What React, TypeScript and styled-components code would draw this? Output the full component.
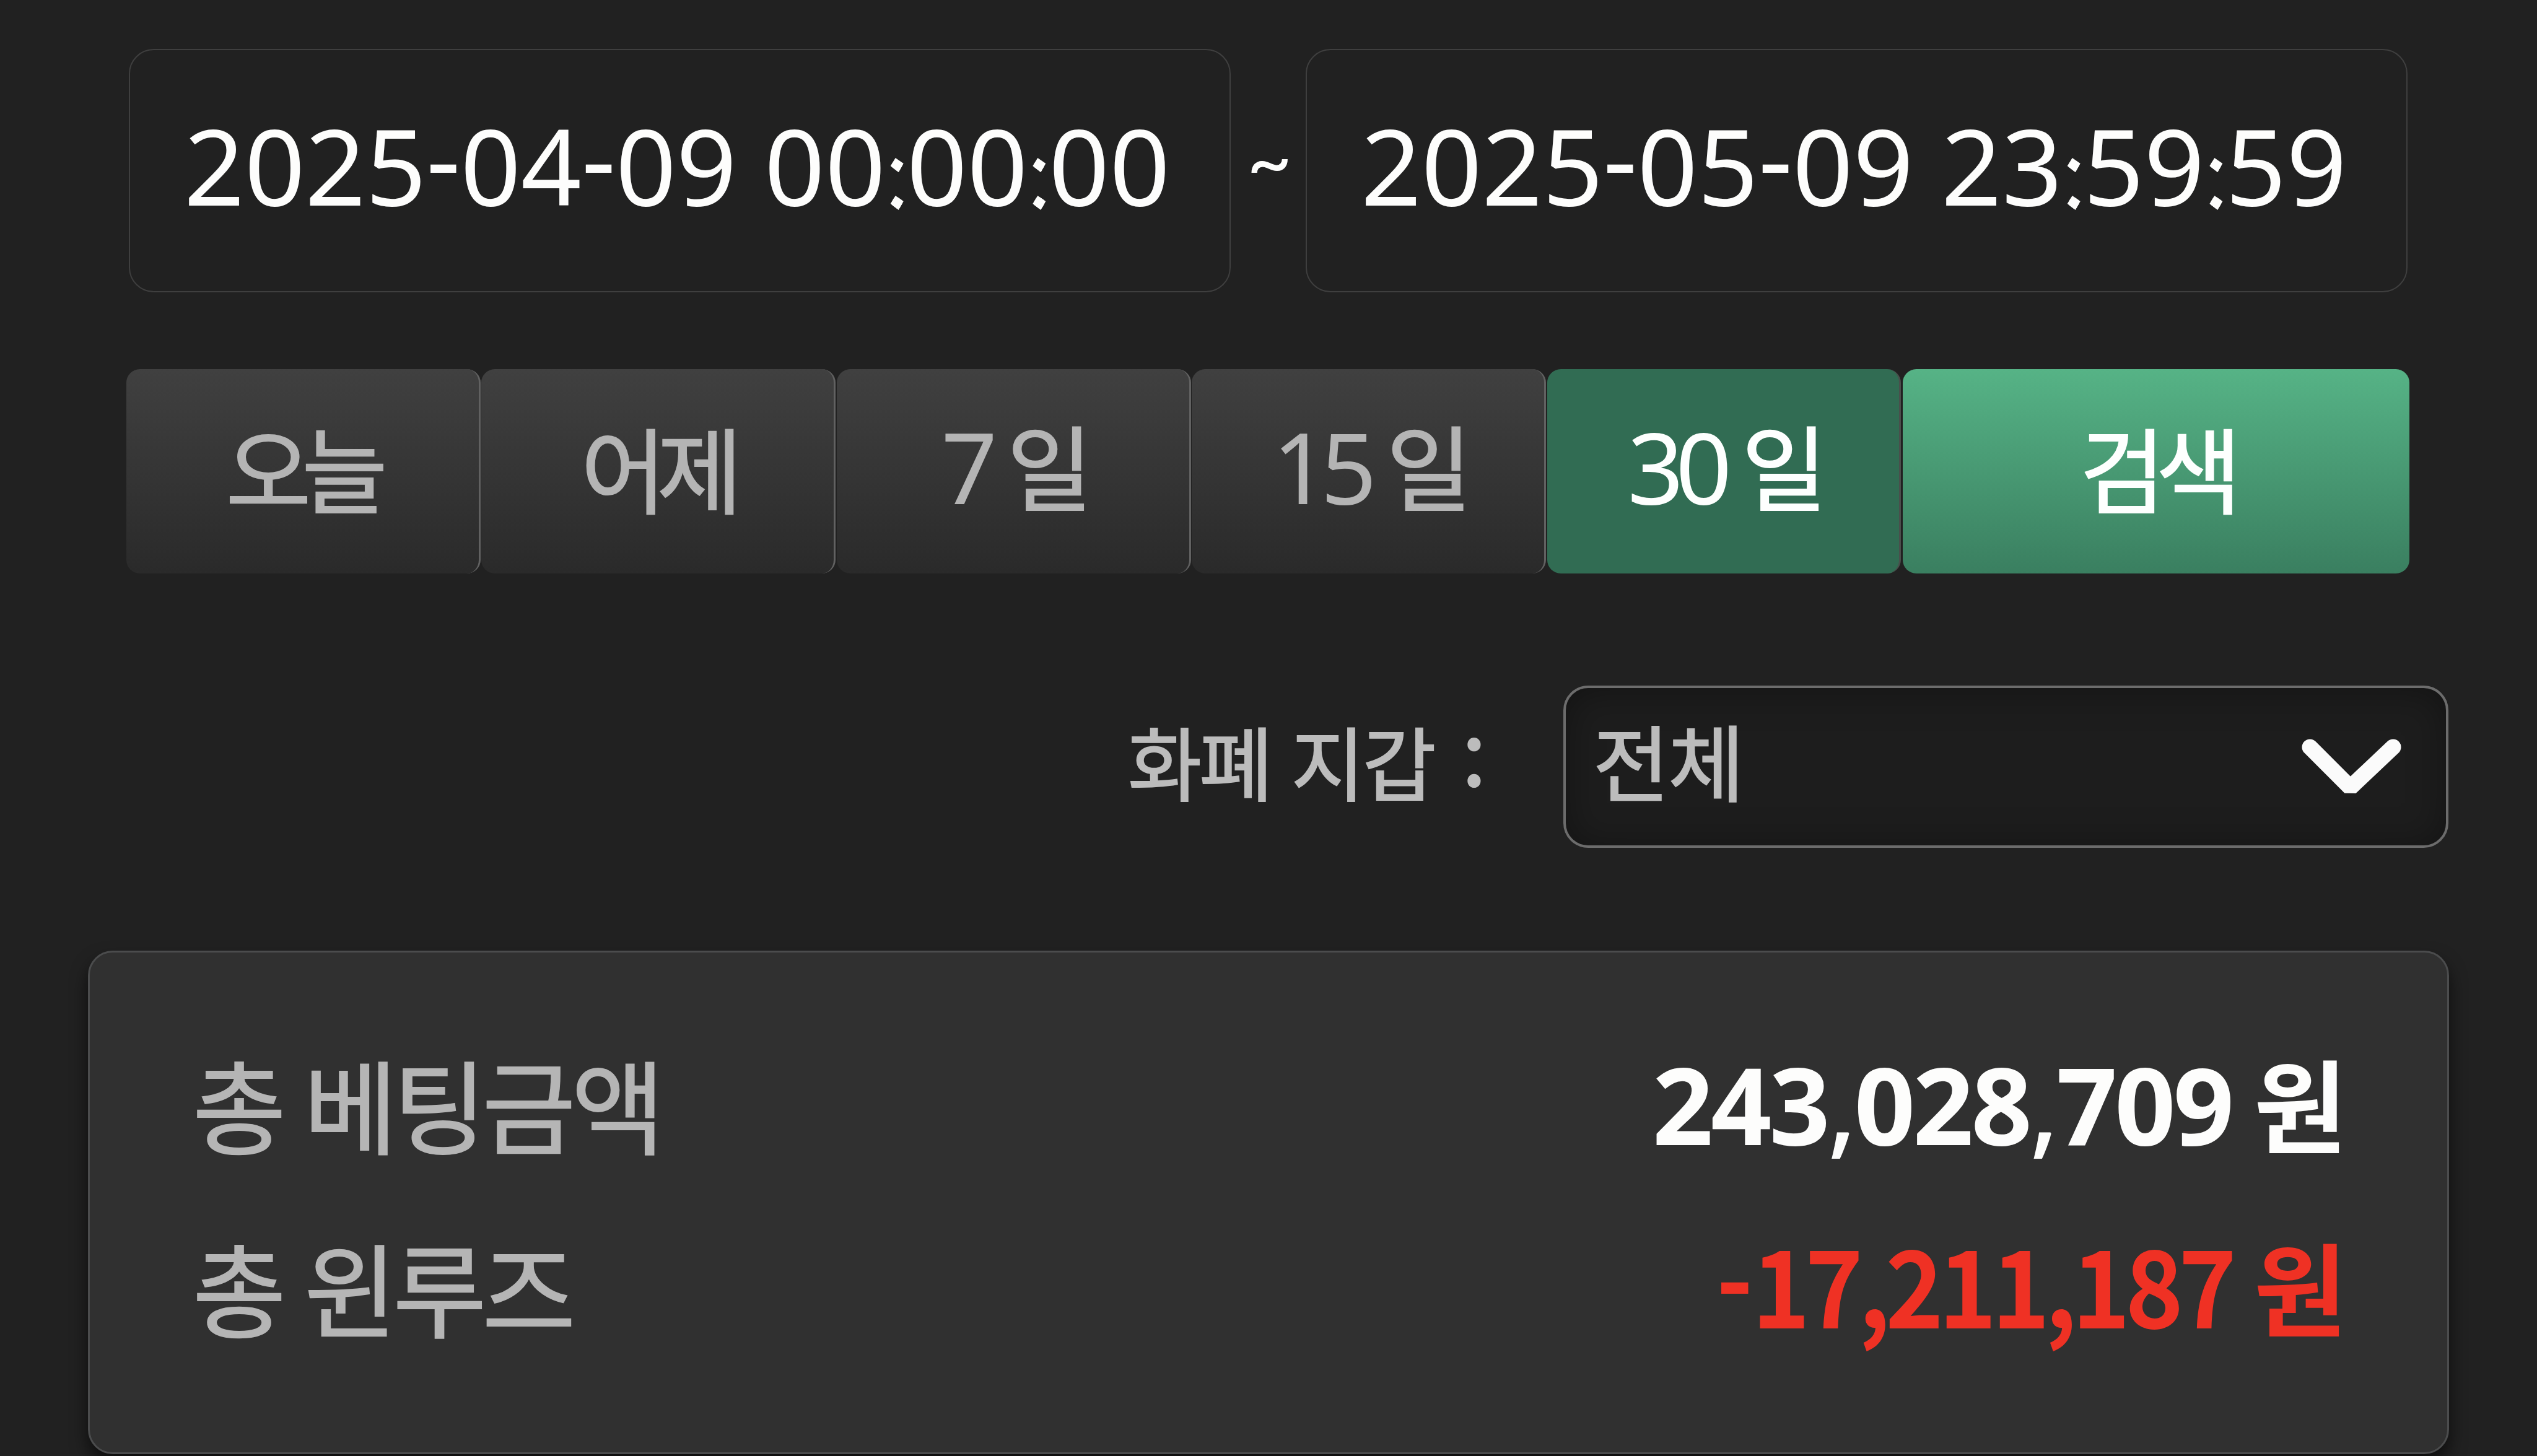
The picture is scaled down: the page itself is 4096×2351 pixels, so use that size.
import { Fragment } from "react";
import styled, { createGlobalStyle } from "styled-components";

const GlobalStyle = createGlobalStyle`
  * {
    box-sizing: border-box;
  }
  body {
    margin: 0;
    background: #212121;
  }
`;

const periods = ["오늘", "어제", "7 일", "15 일", "30 일"];
const activePeriod = "30 일";

const DateTime = ({ value }: { value: string }) => (
  <DateBox>
    <DateText>
      { value.split(/([:-])/).map((part, i) => {
        if (part === ":") return <Colon key={i}>:</Colon>;
        if (part === "-") return <Hyphen key={i}>-</Hyphen>;
        return <Fragment key={i}>{part}</Fragment>;
      }) }
    </DateText>
  </DateBox>
);

const PeriodLabel = ({ text }: { text: string }) => {
  const [num, unit] = text.split(" ");
  if (!unit) return <>{text}</>;
  return (<>
    <Digits>{num} </Digits>{unit}
  </>);
};

export default function App() {
  return (<>
    <GlobalStyle />
    <Page>
      <DateRow>
        <DateTime value="2025-04-09 00:00:00" />
        <Tilde>~</Tilde>
        <DateTime value="2025-05-09 23:59:59" />
      </DateRow>
      <PeriodRow>
        { periods.map((p) => (
          <PeriodButton key={p} $active={p === activePeriod}>
            <span><PeriodLabel text={p} /></span>
          </PeriodButton>
        )) }
        <SearchButton><span>검색</span></SearchButton>
      </PeriodRow>
      <WalletRow>
        <WalletLabel>화폐 지갑 <LabelColon>:</LabelColon></WalletLabel>
        <Select>
          <SelectText>전체</SelectText>
          <Chevron viewBox="0 0 168 95">
            <polyline points="14,14 82,82 154,14" />
          </Chevron>
        </Select>
      </WalletRow>
      <Card>
        <Row>
          <RowLabel>총 베팅금액</RowLabel>
          <Amount>
            <Total>243<Comma>,</Comma>028<Comma>,</Comma>709</Total>
            <Won>원</Won>
          </Amount>
        </Row>
        <Row>
          <RowLabel>총 윈루즈</RowLabel>
          <Amount $minus>
            <Loss><Minus>-</Minus>17,211,187</Loss>
            <Won>원</Won>
          </Amount>
        </Row>
      </Card>
    </Page>
  </>);
}

const Page = styled.main`
  display: flex;
  flex-direction: column;
  width: 4096px;
  height: 2351px;
  padding-top: 79px;
  overflow: hidden;
  background: #212121;
  font-family: "Noto Sans CJK KR", sans-serif;
`;

const DateRow = styled.div`
  display: flex;
  flex: none;
  height: 393px;
  margin-left: 208px;
`;

const DateBox = styled.div`
  display: flex;
  align-items: center;
  width: 1779px;
  padding: 0 0 20px 87px;
  border: 2px solid #3f3f3f;
  border-radius: 40px;
`;

const DateText = styled.span`
  font: 400 171px/1 "Noto Sans", sans-serif;
  color: #fdfdfc;
  white-space: pre;
`;

const Hyphen = styled.span`
  line-height: 0;
  vertical-align: 14px;
`;

/* the dots are cut to small diamonds */
const Colon = styled.span`
  display: inline-block;
  width: 34px;
  height: 110px;
  font-size: 138px;
  line-height: 110px;
  -webkit-text-stroke: 10px #fdfdfc;
  vertical-align: -3px;
  clip-path: polygon(
    16px 29px, 29px 38px, 21px 52px, 8px 42px, 16px 29px,
    16px 90px, 29px 99px, 21px 113px, 8px 103px, 16px 90px
  );
`;

const Tilde = styled.span`
  width: 121px;
  padding: 115px 0 0 4px;
  text-align: center;
  font: 400 126px/1 Lato, sans-serif;
  color: #fdfdfc;
`;

const PeriodRow = styled.div`
  display: grid;
  grid-template-columns: repeat(5, 573.4px) 819px;
  flex: none;
  height: 330px;
  margin: 124px 0 0 204px;
`;

const Button = styled.button`
  display: flex;
  align-items: center;
  justify-content: center;
  margin: 0;
  padding: 0 2px 17px 0;
  border: 0;
  border-radius: 22px;
  font: 400 150px/1 "Noto Sans CJK KR", sans-serif;
  letter-spacing: -15px;
  white-space: pre;
  -webkit-text-stroke: 2px currentColor;
`;

const PeriodButton = styled(Button)<{ $active: boolean }>`
  margin-right: 1.5px;
  background: ${(p) => p.$active ? "#316c53" : "linear-gradient(#404040, #2a2a2a)"};
  border-right: 3px solid ${(p) => p.$active ? "#4a4f4c" : "#616161"};
  color: ${(p) => p.$active ? "#fdfffe" : "#b4b4b4"};
`;

const SearchButton = styled(Button)`
  margin-left: 1px;
  padding-right: 0;
  background: linear-gradient(#56b386, #3a7f60);
  color: #fdfffe;
`;

const Digits = styled.span`
  font-family: "Noto Sans", sans-serif;
  font-size: 159px;
  letter-spacing: -13px;
  -webkit-text-stroke: 0;
`;

const WalletRow = styled.div`
  display: flex;
  flex: none;
  align-items: center;
  justify-content: flex-end;
  height: 262px;
  margin: 181px 143px 0 0;
`;

const WalletLabel = styled.span`
  padding-bottom: 22px;
  margin-right: 128px;
  font-size: 129.5px;
  line-height: 1;
  letter-spacing: -4px;
  word-spacing: 8px;
  color: #bcbcbc;
  white-space: pre;
  -webkit-text-stroke: 2px currentColor;
`;

const LabelColon = styled.span`
  margin-left: 12px;
  font-size: 145px;
  line-height: 0;
  vertical-align: 14px;
`;

const Select = styled.div`
  display: flex;
  align-items: center;
  justify-content: space-between;
  width: 1429px;
  height: 262px;
  padding: 0 72px 0 44px;
  border: 4px solid #6c6c6c;
  border-radius: 40px;
  background: #1d1d1d;
  box-shadow: inset 0 4px 60px rgba(0, 0, 0, 0.35);
`;

const SelectText = styled.span`
  padding-bottom: 25px;
  font-size: 134px;
  line-height: 1;
  letter-spacing: -2px;
  color: #bcbcbc;
  -webkit-text-stroke: 2px currentColor;
`;

const Chevron = styled.svg`
  width: 161px;
  height: 91px;
  fill: none;
  stroke: #fbfbfb;
  stroke-width: 27;
  stroke-linecap: round;
  stroke-linejoin: bevel;
`;

const Card = styled.section`
  flex: none;
  width: 3812px;
  height: 813px;
  margin: 166px 0 0 142px;
  padding: 94px 162px 0 166px;
  border: 3px solid #4b4c4d;
  border-radius: 40px;
  background: #303030;
  box-shadow: 0 16px 28px rgba(0, 0, 0, 0.6);
`;

const Row = styled.div`
  display: flex;
  align-items: center;
  justify-content: space-between;
  height: 296px;
`;

const RowLabel = styled.span`
  font-size: 164px;
  line-height: 1;
  letter-spacing: -7px;
  word-spacing: 6px;
  color: #b5b5b5;
  -webkit-text-stroke: 2px currentColor;
`;

const Amount = styled.span<{ $minus?: boolean }>`
  display: flex;
  align-items: baseline;
  padding: ${(p) => p.$minus ? "0 0 13px" : "4px 0 0"};
  font-weight: 700;
  line-height: 1;
  color: ${(p) => p.$minus ? "#ef3124" : "#fdfdfc"};
`;

const Total = styled.span`
  font-family: "Noto Sans", sans-serif;
  font-size: 172px;
  letter-spacing: -4px;
`;

const Comma = styled.span`
  font-weight: 500;
`;

const Loss = styled.span`
  font-size: 173px;
  letter-spacing: -8.7px;
  transform: scaleX(0.92);
  transform-origin: right;
`;

const Minus = styled.span`
  line-height: 0;
  letter-spacing: -2px;
  vertical-align: 16px;
`;

const Won = styled.span`
  margin-left: 36px;
  font-size: 163px;
`;
